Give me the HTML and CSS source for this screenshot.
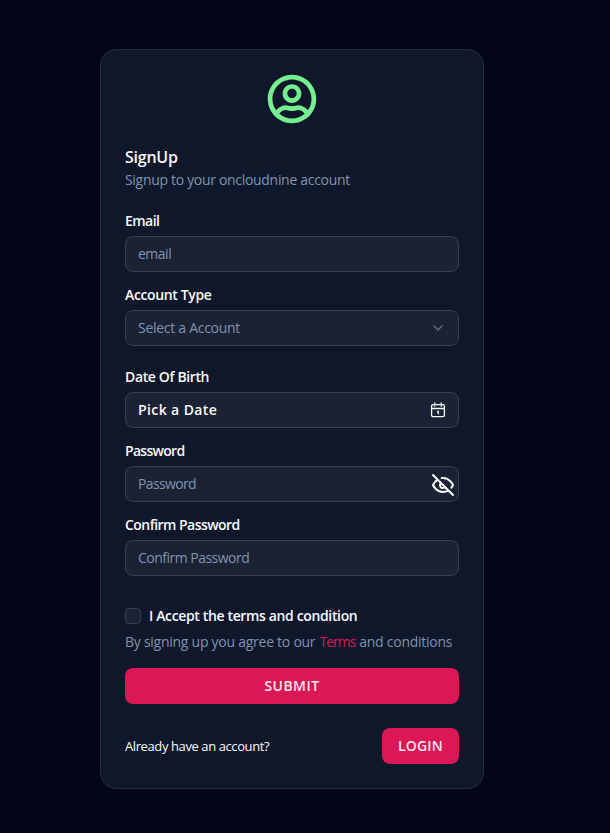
FILE: index.html
```html
<!DOCTYPE html>
<html lang="en">
<head>
<meta charset="utf-8">
<title>SignUp</title>
<link rel="stylesheet" href="styles.css">
</head>
<body>
<main class="card">
  <svg class="avatar" viewBox="0 0 496 512" fill="currentColor"><path d="M248 104c-53 0-96 43-96 96s43 96 96 96 96-43 96-96-43-96-96-96zm0 144c-26.5 0-48-21.5-48-48s21.5-48 48-48 48 21.5 48 48-21.5 48-48 48zm0-240C111 8 0 119 0 256s111 248 248 248 248-111 248-248S385 8 248 8zm0 448c-49.7 0-95.1-18.3-130.1-48.4 14.9-23 40.4-38.6 69.6-39.5 20.8 6.4 40.6 9.6 60.5 9.6s39.7-3.1 60.5-9.6c29.2 1 54.7 16.5 69.6 39.5-35 30.1-80.4 48.4-130.1 48.4zm162.7-84.1c-24.4-31.4-62.1-51.9-105.1-51.9-10.2 0-26 9.6-57.6 9.6-31.5 0-47.4-9.6-57.6-9.6-42.9 0-80.6 20.5-105.1 51.9C61.9 339.2 48 299.2 48 256c0-110.3 89.7-200 200-200s200 89.7 200 200c0 43.2-13.9 83.2-37.3 115.9z"/></svg>
  <header class="heading">
    <h1 class="title">SignUp</h1>
    <p class="subtitle">Signup to your oncloudnine account</p>
  </header>
  <form class="form">
    <div class="field">
      <span class="label label-email">Email</span>
      <div class="control"><span class="hint hint-email">email</span></div>
    </div>
    <div class="field field-wide">
      <span class="label label-type">Account Type</span>
      <div class="control"><span class="hint hint-type">Select a Account</span>
        <svg class="chevron" viewBox="0 0 24 24" fill="none" stroke="currentColor" stroke-width="2" stroke-linecap="round" stroke-linejoin="round"><path d="m6 9 6 6 6-6"/></svg>
      </div>
    </div>
    <div class="field">
      <span class="label label-dob">Date Of Birth</span>
      <div class="control"><span class="picked">Pick a Date</span>
        <svg class="calendar" viewBox="0 0 16 16" fill="none" stroke="currentColor" stroke-width="1.3" stroke-linecap="round" stroke-linejoin="round"><rect x="1.6" y="2.6" width="12.8" height="12" rx="1.4"/><path d="M1.6 6.5h12.8M4.7 1v3M11.3 1v3M7.4 9.6l.9-.3v2.5"/></svg>
      </div>
    </div>
    <div class="field">
      <span class="label label-password">Password</span>
      <div class="control"><span class="hint hint-password">Password</span>
        <svg class="eye" viewBox="0 0 24 24" fill="none" stroke="currentColor" stroke-width="2" stroke-linecap="round" stroke-linejoin="round"><path d="M9.88 9.88a3 3 0 1 0 4.24 4.24M10.73 5.08A10.43 10.43 0 0 1 12 5c7 0 10 7 10 7a13.16 13.16 0 0 1-1.67 2.68M6.61 6.61A13.526 13.526 0 0 0 2 12s3 7 10 7a9.74 9.74 0 0 0 5.39-1.61M2 2l20 20"/></svg>
      </div>
    </div>
    <div class="field">
      <span class="label label-confirm">Confirm Password</span>
      <div class="control"><span class="hint hint-confirm">Confirm Password</span></div>
    </div>
    <div class="accept"><span class="checkbox"></span><span class="label label-accept">I Accept the terms and condition</span></div>
    <p class="terms">By signing up you agree to our <a class="link">Terms</a> and conditions</p>
    <button class="button submit" type="button">SUBMIT</button>
  </form>
  <footer class="footer"><span class="question">Already have an account?</span><button class="button login" type="button">LOGIN</button></footer>
</main>
</body>
</html>
```
FILE: styles.css
```css
* { box-sizing: border-box; }
body { margin: 0; height: 833px; overflow: hidden; background: #020617; color: #f8fafc; font: 14px/20px "Open Sans", "Noto Sans", sans-serif; }
h1, p { margin: 0; }
svg { display: block; flex: none; }
.card { width: 384px; height: 740px; margin: 49px 0 0 100px; padding: 24px; border: 1px solid #242e3f; border-radius: 16px; background: #0f172a; }
.avatar { width: 50px; height: 50px; margin: 0 auto; color: #75f08f; }
.heading { margin-top: 21px; white-space: nowrap; }
.title { font-size: 16px; line-height: 24px; font-weight: 600; letter-spacing: -.25px; }
.subtitle { color: #8094b0; margin-top: 1px; letter-spacing: -.31px; }
.form { display: flex; flex-direction: column; margin-top: 21px; white-space: nowrap; }
.field { margin-bottom: 13px; }
.field-wide { margin-bottom: 21px; }
.label { display: block; height: 20px; font-weight: 600; }
.label-email { letter-spacing: -.55px; }
.label-type { letter-spacing: -.36px; }
.label-dob { letter-spacing: -.37px; }
.label-password { letter-spacing: -.7px; }
.label-confirm { letter-spacing: -.54px; }
.label-accept { letter-spacing: -.36px; }
.control { display: flex; align-items: center; justify-content: space-between; height: 36px; margin-top: 5px; padding: 0 12px; border: 1px solid #374151; border-radius: 8px; background: #1a2234; }
.hint { color: #8094b0; }
.hint-email { letter-spacing: -.5px; }
.hint-type { letter-spacing: -.28px; }
.hint-password { letter-spacing: -.65px; }
.hint-confirm { letter-spacing: -.52px; }
.picked { font-weight: 600; letter-spacing: .4px; }
.chevron { width: 16px; height: 16px; color: #64748b; }
.calendar { width: 16px; height: 16px; }
.eye { width: 24px; height: 24px; margin: 2px -9px 0 0; }
.accept { display: flex; align-items: center; gap: 8px; margin-top: 17px; }
.checkbox { width: 16px; height: 16px; border: 1px solid #374151; border-radius: 4px; background: #1a2234; }
.terms { margin-top: 6px; color: #8094b0; letter-spacing: -.26px; }
.link { margin: 0 .3px 0 .7px; color: #db1756; letter-spacing: -.95px; }
.button { height: 36px; padding: 0; border: 0; border-radius: 8px; background: #db1756; color: #f1e8ee; font: 600 14px/20px "Open Sans", sans-serif; letter-spacing: .45px; }
.submit { margin-top: 16px; }
.login { width: 77px; letter-spacing: .2px; }
.footer { display: flex; align-items: center; justify-content: space-between; margin-top: 24px; }
.question { font-size: 13px; letter-spacing: -.4px; white-space: nowrap; }
```
